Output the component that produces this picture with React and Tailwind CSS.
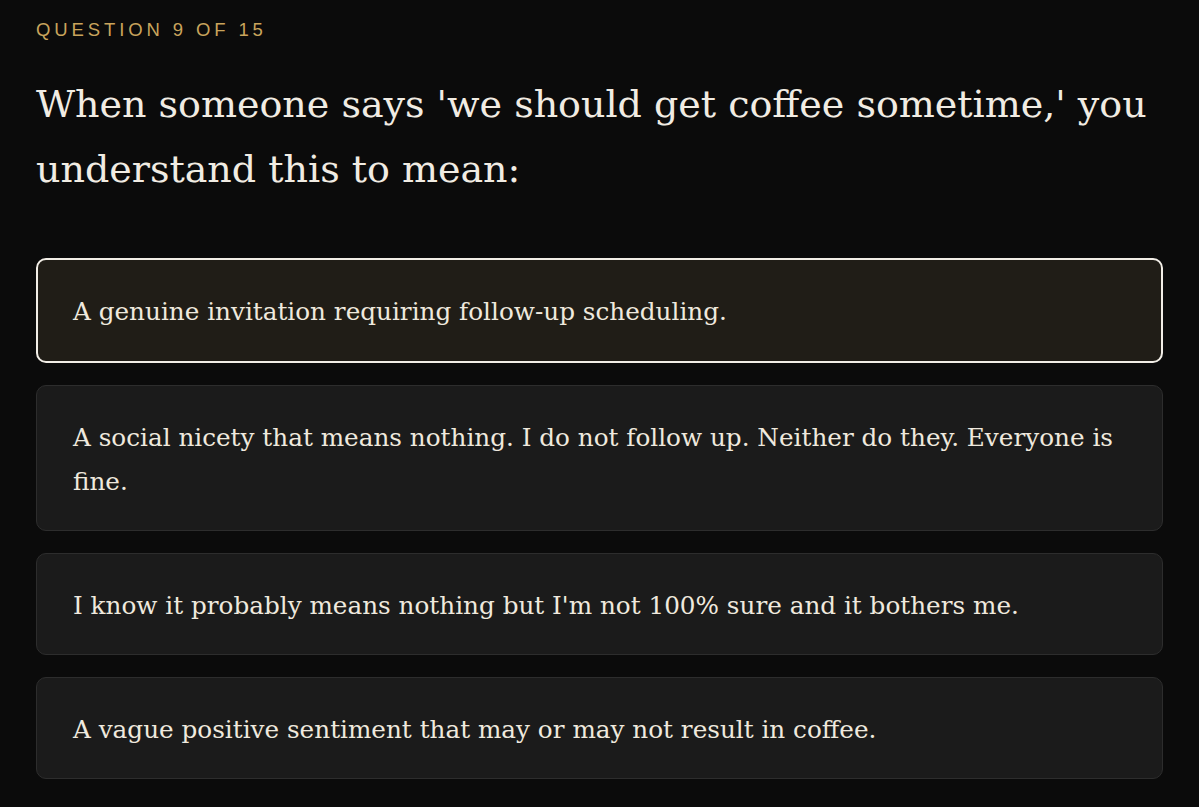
import { useState } from 'react';

const options = [
  'A genuine invitation requiring follow-up scheduling.',
  'A social nicety that means nothing. I do not follow up. Neither do they. Everyone is fine.',
  "I know it probably means nothing but I'm not 100% sure and it bothers me.",
  'A vague positive sentiment that may or may not result in coffee.',
];

export default function App() {
  const [selected, setSelected] = useState(0);

  return (
    <div className="min-h-screen bg-[#0b0b0b] px-9 pt-[18px] pb-8">
      <div className="font-['Liberation_Sans',Arial,sans-serif] text-[18.5px] leading-[24px] tracking-[0.21em] text-[#c9a45c]">
        QUESTION 9 OF 15
      </div>

      <h1 className="mt-[30px] font-['DejaVu_Serif',Georgia,serif] text-[38px] leading-[65px] font-normal text-[#f1ece3]">
        When someone says 'we should get coffee sometime,' you understand this to mean:
      </h1>

      <div className="mt-[56px] flex flex-col gap-[22px]">
        {options.map((text, i) => (
          <button
            key={i}
            onClick={() => setSelected(i)}
            className={
              i === selected
                ? "w-full text-left rounded-[10px] border-2 border-[#f2eee7] bg-[#201d17] px-[35px] pt-[30px] pb-[27px] font-['DejaVu_Serif',Georgia,serif] text-[24.7px] leading-[44px] text-[#efe9de]"
                : "w-full text-left rounded-[10px] border border-[#2d2d2d] bg-[#1b1b1b] px-9 pt-[30px] pb-[26px] font-['DejaVu_Serif',Georgia,serif] text-[24.7px] leading-[44px] text-[#efe9de]"
            }
          >
            {text}
          </button>
        ))}
      </div>
    </div>
  );
}
